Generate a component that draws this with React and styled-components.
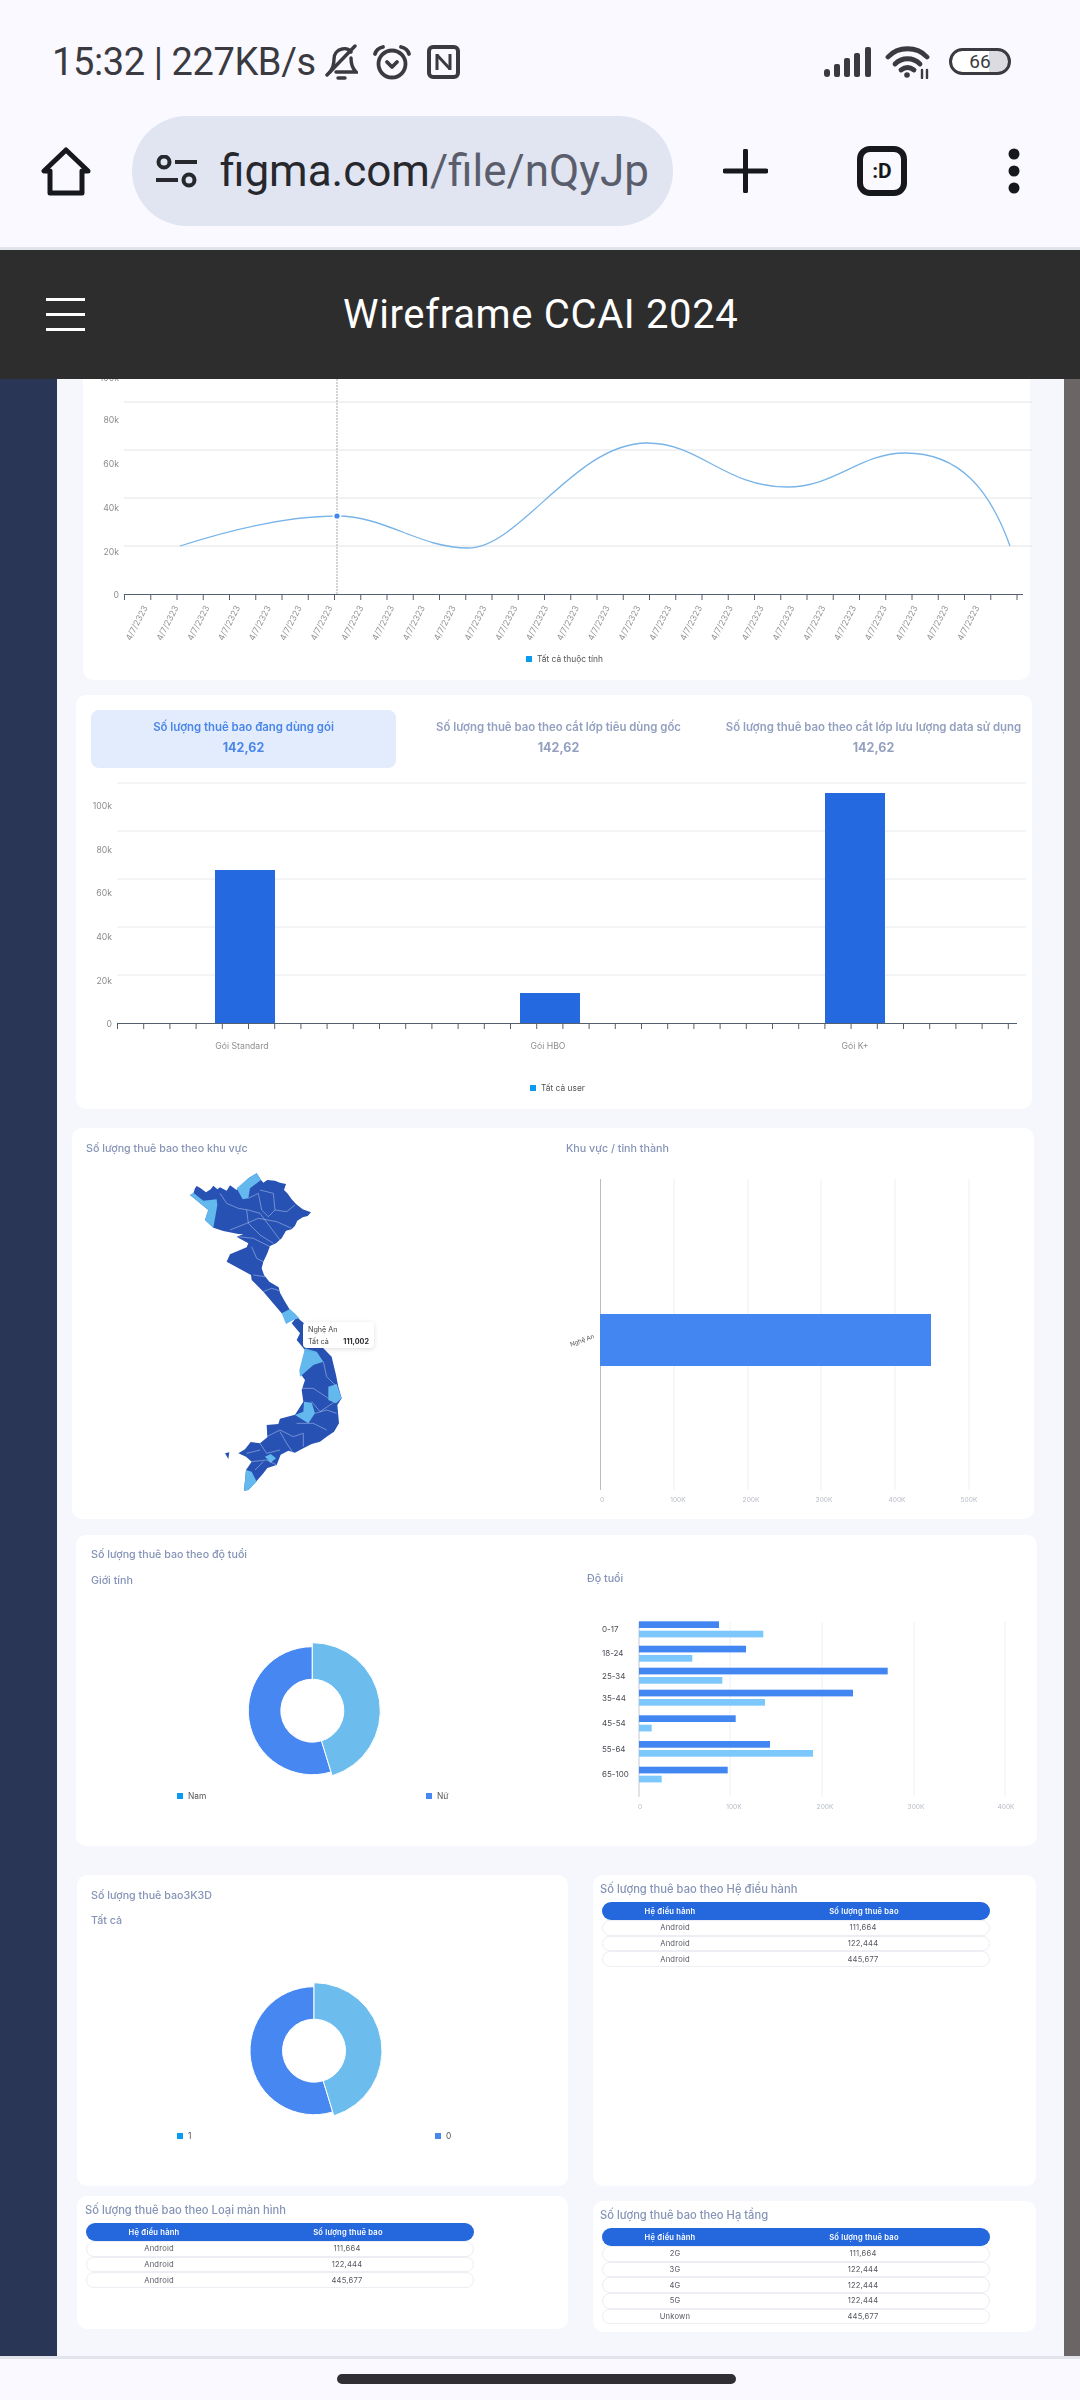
import React from "react";
import styled, { createGlobalStyle } from "styled-components";

const GlobalStyle = createGlobalStyle`
  html, body {
    margin: 0;
    padding: 0;
    background: #f9f9ff;
    font-family: "Inter", "Noto Sans", sans-serif;
  }
  * {
    box-sizing: border-box;
  }
`;

const Screen = styled.div`
  width: 1080px;
  height: 2400px;
  display: flex;
  flex-direction: column;
  overflow: hidden;
  background: #f9f9ff;
`;

const StatusBar = styled.div`
  height: 115px;
  padding: 8px 0 0 52px;
  display: flex;
  align-items: center;
  color: #3a3a40;
  font-family: "Roboto", sans-serif;
`;

const StatusText = styled.span`
  width: 272px;
  flex: none;
  font-size: 38px;
  letter-spacing: -0.4px;
  white-space: nowrap;
`;

const StatusIcon = styled.svg`
  flex: none;
  margin-right: ${(props) => props.$mr || 0}px;
  margin-left: ${(props) => props.$ml || 0}px;
`;

const Battery = styled.div`
  width: 62px;
  height: 27px;
  margin-left: 19px;
  border: 3px solid #3a3a40;
  border-radius: 14px;
  background: linear-gradient(90deg, #fff 0 66%, #dcdce0 66% 100%);
  display: flex;
  align-items: center;
  justify-content: center;
  font-size: 19px;
  line-height: 1;
`;

const AddressBar = styled.div`
  height: 135px;
  padding: 0 0 20px 41px;
  display: flex;
  align-items: center;
  border-bottom: 3px solid #e2e4ec;
`;

const UrlPill = styled.div`
  width: 541px;
  height: 110px;
  margin-left: 41px;
  padding-left: 23px;
  display: flex;
  align-items: center;
  gap: 22px;
  border-radius: 55px;
  background: #e1e5f1;
  font-family: "Roboto", sans-serif;
  font-size: 44px;
  white-space: nowrap;
`;

const UrlHost = styled.span`
  color: #26282e;
`;

const UrlPath = styled.span`
  color: #5a5e6c;
`;

const TabCount = styled.div`
  width: 50px;
  height: 50px;
  margin-left: 89px;
  border: 6px solid #17181c;
  border-radius: 13px;
  display: flex;
  align-items: center;
  justify-content: center;
  font-family: "Roboto", sans-serif;
  font-size: 21px;
  font-weight: 700;
  color: #17181c;
`;

const TitleBar = styled.header`
  height: 129px;
  padding-left: 46px;
  display: flex;
  align-items: center;
  background: #2d2d2d;
`;

const Hamburger = styled.div`
  width: 39px;
  height: 33px;
  display: flex;
  flex-direction: column;
  justify-content: space-between;
`;

const HamburgerLine = styled.span`
  height: 3px;
  background: #fff;
`;

const AppTitle = styled.h1`
  margin: 0 0 0 258px;
  font-family: "Roboto", sans-serif;
  font-size: 40px;
  font-weight: 400;
  letter-spacing: 0.65px;
  color: #fff;
  white-space: nowrap;
`;

const Body = styled.div`
  height: 1977px;
  display: flex;
  overflow: hidden;
  background: #f5f7fc;
`;

const Rail = styled.div`
  width: 57px;
  flex: none;
  background: #2a3655;
`;

const Scrollbar = styled.div`
  width: 16px;
  flex: none;
  background: #6b6565;
`;

const Content = styled.main`
  flex: 1;
  min-width: 0;
  filter: blur(0.45px);
`;

const Card = styled.section`
  width: ${(props) => props.$w}px;
  height: ${(props) => props.$h}px;
  margin-top: ${(props) => props.$mt || 0}px;
  margin-left: ${(props) => props.$ml || 0}px;
  padding: ${(props) => props.$pad || "0"};
  border-radius: ${(props) => props.$radius || "10px"};
  background: #fff;
`;

const Title = styled.div`
  height: 14px;
  margin-top: ${(props) => props.$mt || 0}px;
  font-size: ${(props) => props.$size || 10.7}px;
  line-height: 14px;
  font-weight: 500;
  color: #8593b6;
  white-space: nowrap;
`;

const Chart = styled.svg`
  display: block;
  margin-top: ${(props) => props.$mt || 0}px;
`;

const ChartBleed = styled.div`
  margin-left: -15px;
`;

const ChartText = styled.text`
  font-family: "Inter", sans-serif;
  font-size: ${(props) => props.$size || 8.7}px;
  fill: ${(props) => props.$color || "#8c8c8c"};
  text-anchor: ${(props) => props.$anchor || "middle"};
  dominant-baseline: central;
`;

const LegendRow = styled.div`
  height: 12px;
  margin-top: ${(props) => props.$mt || 0}px;
  padding-left: ${(props) => props.$pl || 0}px;
  display: flex;
  align-items: center;
`;

const LegendItem = styled.div`
  width: ${(props) => (props.$w ? `${props.$w}px` : "auto")};
  display: flex;
  align-items: center;
  gap: 5px;
  font-size: 8.4px;
  color: #555;
  white-space: nowrap;
`;

const LegendSwatch = styled.span`
  width: 6px;
  height: 6px;
  background: ${(props) => props.$color || "#0a9af0"};
`;

const Tabs = styled.div`
  display: grid;
  grid-template-columns: repeat(3, 305px);
  gap: 10px;
`;

const Tab = styled.div`
  height: 58px;
  padding-top: 10px;
  display: flex;
  flex-direction: column;
  align-items: center;
  gap: 7px;
  border-radius: 8px;
  background: ${(props) => (props.$active ? "#e2ecfd" : "transparent")};
  color: ${(props) => (props.$active ? "#4a86e8" : "#93a0bf")};
  white-space: nowrap;
`;

const TabLabel = styled.span`
  font-size: 11.4px;
  line-height: 14px;
  font-weight: 600;
`;

const TabValue = styled.span`
  font-size: 12.5px;
  line-height: 14px;
  font-weight: 700;
`;

const SplitGrid = styled.div`
  display: grid;
  grid-template-columns: ${(props) => props.$columns};
`;

const Panel = styled.div`
  padding-left: ${(props) => props.$pl || 0}px;
  min-width: 0;
`;

const MapWrap = styled.div`
  position: relative;
  width: 220px;
  height: 340px;
  margin: 4px 0 0 94px;
`;

const MapTooltip = styled.div`
  position: absolute;
  left: 123px;
  top: 162px;
  width: 71px;
  height: 26px;
  padding: 2px 5px;
  border-radius: 4px;
  background: #fff;
  box-shadow: 0 1px 4px rgba(30, 40, 70, 0.16);
  font-size: 7.2px;
  line-height: 11.5px;
  color: #444;
  white-space: nowrap;
`;

const TooltipRow = styled.div`
  display: flex;
  justify-content: space-between;
`;

const TooltipValue = styled.b`
  font-weight: 700;
  color: #2c2c30;
`;

const BottomGrid = styled.div`
  margin: 29px 0 0 20px;
  display: grid;
  grid-template-columns: 491px 443px;
  column-gap: 25px;
`;

const TableCard = styled(Card)`
  padding: 7px 0 0 ${(props) => props.$pl}px;
`;

const Table = styled.div`
  width: 388px;
  margin: 6px 0 0 ${(props) => props.$ml}px;
`;

const TableHead = styled.div`
  height: 18px;
  display: grid;
  grid-template-columns: 136px 252px;
  align-items: center;
  border-radius: 9px;
  background: #2568de;
  color: #fff;
  font-size: 7.6px;
  font-weight: 600;
  letter-spacing: 0.2px;
  text-align: center;
`;

const TableRow = styled.div`
  height: 15.7px;
  display: grid;
  grid-template-columns: 144px 232px;
  align-items: center;
  border: 1px solid #eceef3;
  border-radius: 8px;
  color: #55585f;
  font-size: 7.6px;
  letter-spacing: 0.2px;
  text-align: center;
`;

const NavBar = styled.div`
  flex: 1;
  padding-top: 15px;
  display: flex;
  justify-content: center;
  border-top: 3px solid #e2e4ec;
`;

const NavHandle = styled.div`
  width: 399px;
  height: 10px;
  margin-right: 7px;
  border-radius: 5px;
  background: #303034;
`;

const BellIcon = () => (
  <StatusIcon width="34" height="36" viewBox="0 0 34 36" fill="none" stroke="#3a3a40" strokeWidth="3.4" strokeLinecap="round">
    <path d="M6 28c3-4 4-8 4-13 0-5 3-9 8-10 4-1 7 0 9 3M27 14c0 6 1 10 5 14H12" />
    <path d="M3 31 31 2" />
    <path d="M14 34h7" />
  </StatusIcon>
);

const AlarmIcon = () => (
  <StatusIcon width="40" height="36" viewBox="0 0 40 36" fill="none" stroke="#3a3a40" strokeWidth="3.8" strokeLinecap="round" strokeLinejoin="round" $ml={14}>
    <circle cx="20" cy="20" r="13.5" />
    <path d="M3 10c1-4 4-6 8-7M37 10c-1-4-4-6-8-7" />
    <path d="m15 18 5 5 5-5" />
  </StatusIcon>
);

const NfcIcon = () => (
  <StatusIcon width="33" height="34" viewBox="0 0 33 34" fill="none" $ml={15}>
    <rect x="2" y="2" width="29" height="30" rx="4" stroke="#3a3a40" strokeWidth="4" />
    <path d="M10 9v16M23 9v16" stroke="#3a3a40" strokeWidth="3" />
    <path d="M10 10 23 24" stroke="#3a3a40" strokeWidth="3" />
  </StatusIcon>
);

const SignalIcon = () => (
  <StatusIcon width="47" height="30" viewBox="0 0 47 30" fill="#3a3a40" $ml={364}>
    <rect x="0" y="22" width="6" height="8" rx="3" />
    <rect x="10" y="17" width="6" height="13" rx="2" />
    <rect x="20" y="11" width="6" height="19" rx="2" />
    <rect x="30" y="6" width="6" height="24" rx="2" />
    <rect x="41" y="0" width="6" height="30" rx="2" />
  </StatusIcon>
);

const WifiIcon = () => (
  <StatusIcon width="45" height="34" viewBox="0 0 45 34" fill="none" stroke="#3a3a40" strokeWidth="4.8" strokeLinecap="round" $ml={14}>
    <path d="M3 12C13 1 32 1 42 12" />
    <path d="M10 19c7-7 18-7 25 0" />
    <path d="M16 25c4-3 9-3 13 0" />
    <circle cx="22" cy="30" r="2.8" fill="#3a3a40" stroke="none" />
    <path d="M37 25v8M42 25v8" strokeWidth="2.4" />
  </StatusIcon>
);

const HomeIcon = () => (
  <svg width="50" height="50" viewBox="0 0 50 50" fill="none" stroke="#17181c" strokeWidth="5" strokeLinejoin="round">
    <path d="M25 4 3 25h6v22h32V25h6Z" />
  </svg>
);

const TuneIcon = () => (
  <svg width="43" height="33" viewBox="0 0 43 33" fill="none" stroke="#26282e" strokeWidth="4" style={{ flex: "none" }}>
    <circle cx="9" cy="7" r="5.5" />
    <path d="M20 7h22M1 25h22" />
    <circle cx="34" cy="25" r="5.5" />
  </svg>
);

const PlusIcon = () => (
  <svg width="45" height="44" viewBox="0 0 45 44" fill="none" stroke="#17181c" strokeWidth="5" strokeLinecap="round" style={{ marginLeft: 50 }}>
    <path d="M22.5 2v40M2 22h41" />
  </svg>
);

const MoreIcon = () => (
  <svg width="12" height="46" viewBox="0 0 12 46" fill="#17181c" style={{ marginLeft: 101 }}>
    <circle cx="6" cy="6" r="5.5" />
    <circle cx="6" cy="23" r="5.5" />
    <circle cx="6" cy="40" r="5.5" />
  </svg>
);

const range = (n) => Array.from({ length: n }, (_, i) => i);

const LineChart = () => (
  <Chart width="950" height="268" viewBox="83 379 950 268">
    {[402, 450, 498, 546].map((y) => (
      <line key={y} x1="124" x2="1032" y1={y} y2={y} stroke="#e2e4e8" />
    ))}
    {[["100k", 378], ["80k", 420], ["60k", 464], ["40k", 508], ["20k", 552], ["0", 595]].map(([t, y]) => (
      <ChartText key={t} x="119" y={y} $anchor="end">{t}</ChartText>
    ))}
    <line x1="124" x2="1023" y1="594.5" y2="594.5" stroke="#55606e" />
    {range(35).map((i) => (
      <line key={i} x1={124.5 + i * 26.25} x2={124.5 + i * 26.25} y1="594" y2="600" stroke="#55606e" />
    ))}
    {range(28).map((i) => {
      const x = 128 + i * 30.8;
      return (
        <ChartText key={i} x={x} y="640" $size={8.7} $color="#989898" $anchor="start" transform={`rotate(-63 ${x} 640)`}>
          4/7/2323
        </ChartText>
      );
    })}
    <line x1="337" x2="337" y1="379" y2="594" stroke="#a8a8a8" strokeDasharray="2 1" />
    <path
      d="M180 546C230 530 290 516 337 516C385 516 420 548 468 548C520 548 575 443 647 443C700 443 725 487 787 487C835 487 860 453 905 453C960 453 990 490 1010 546"
      fill="none"
      stroke="#78b4e8"
      strokeWidth="1.3"
    />
    <circle cx="337" cy="516" r="4.5" fill="#fff" />
    <circle cx="337" cy="516" r="2.6" fill="#3f88f2" />
  </Chart>
);

const columns = [
  { label: "Gói Standard", x: 215, top: 870, labelX: 242 },
  { label: "Gói HBO", x: 520, top: 993, labelX: 548 },
  { label: "Gói K+", x: 825, top: 793, labelX: 855 },
];

const ColumnChart = () => (
  <Chart width="956" height="308" viewBox="76 768 956 308">
    {[783, 831, 879, 927, 975].map((y) => (
      <line key={y} x1="117" x2="1026" y1={y} y2={y} stroke="#e8eaee" />
    ))}
    {[["100k", 806], ["80k", 850], ["60k", 893], ["40k", 937], ["20k", 981], ["0", 1024]].map(([t, y]) => (
      <ChartText key={t} x="112" y={y} $anchor="end">{t}</ChartText>
    ))}
    {columns.map((c) => (
      <g key={c.label}>
        <rect x={c.x} y={c.top} width="60" height={1023 - c.top} fill="#2569e0" />
        <ChartText x={c.labelX} y="1046" $color="#8f8f8f">{c.label}</ChartText>
      </g>
    ))}
    <line x1="117" x2="1017" y1="1023.5" y2="1023.5" stroke="#55606e" />
    {range(35).map((i) => (
      <line key={i} x1={117.5 + i * 26.2} x2={117.5 + i * 26.2} y1="1023" y2="1029" stroke="#55606e" />
    ))}
  </Chart>
);

const VietnamMap = () => (
  <svg width="220" height="340" viewBox="0 0 660 1020">
    <path
      fill="#2752b4"
      d="M45 85 50 78 62 85 78 97 92 88 100 77 112 88 120 82 140 92 150 76 170 90 205 55 230 40 243 60 250 68 262 60 285 62 300 68 318 72 312 90 322 100 335 118 348 132 368 148 393 157 383 168 368 172 352 182 345 197 335 208 318 212 305 235 288 250 270 258 262 280 250 305 245 325 252 345 268 365 296 382 300 398 312 420 330 450 345 462 360 480 372 490 400 520 430 565 455 590 462 620 468 645 475 680 485 715 472 735 477 790 462 815 440 830 420 845 395 852 370 865 345 878 325 872 302 884 290 915 262 924 250 940 228 965 205 990 192 992 198 930 215 905 198 890 175 880 195 868 212 846 240 850 262 832 260 795 295 792 300 776 345 764 370 725 365 690 375 660 360 640 375 570 350 540 360 520 335 490 345 478 305 460 250 395 215 360 213 345 140 305 150 283 200 262 205 250 180 236 170 230 190 222 175 222 130 213 100 203 75 180 85 150 30 105 40 100Z"
    />
    <path fill="#2752b4" d="M135 880 148 877 145 897Z" />
    <g fill="#63b8ee">
      <path d="M30 105 40 98 70 122 110 118 112 135 100 203 75 180 85 150Z" />
      <path d="M170 85 205 55 230 40 243 60 210 85 205 115 188 118Z" />
      <path d="M305 460 330 447 358 475 345 478 318 492Z" />
      <path d="M375 565 410 575 430 605 400 615 360 650 358 630Z" />
      <path d="M445 680 470 672 485 715 468 730 445 720Z" />
      <path d="M372 725 395 728 405 760 385 790 345 765 370 755Z" />
      <path d="M255 890 272 882 288 895 272 908Z" />
      <path d="M198 930 215 935 230 965 205 990 192 992Z" />
    </g>
    <g fill="none" stroke="#bccdee" strokeWidth="1.5">
      <polyline points="120,100 140,130 175,145 205,150 240,160 270,200 300,240" />
      <polyline points="205,115 235,100 245,150 265,170 285,150 320,155 345,135" />
      <polyline points="240,90 280,100 285,150" />
      <polyline points="200,150 205,190 240,225 280,250" />
      <polyline points="150,210 200,190 235,175 290,185 335,205" />
      <polyline points="175,230 220,235 270,260" />
      <polyline points="215,260 230,295 250,305" />
      <polyline points="220,345 255,350" />
      <polyline points="250,395 275,385 298,392" />
      <polyline points="430,605 440,650 470,680" />
      <polyline points="365,685 400,685 445,715" />
      <polyline points="395,725 420,755 465,725" />
      <polyline points="405,760 440,750 470,760" />
      <polyline points="350,790 400,790 440,810" />
      <polyline points="300,815 320,850 340,880" />
      <polyline points="260,830 300,810 340,830 370,820 370,860" />
      <polyline points="240,850 260,880 300,870" />
      <polyline points="215,905 260,900 290,915" />
      <polyline points="225,930 250,905" />
      <polyline points="200,880 240,870" />
    </g>
  </svg>
);

const RegionBars = () => (
  <Chart width="468" height="350" viewBox="566 1160 468 350" $mt={4}>
    {[674, 748, 821, 895, 969].map((x) => (
      <line key={x} x1={x} x2={x} y1="1179" y2="1490" stroke="#eceef2" />
    ))}
    <line x1="600.5" x2="600.5" y1="1179" y2="1490" stroke="#b8bcc6" />
    <rect x="600" y="1314" width="331" height="52" fill="#4386f2" />
    <ChartText x="582" y="1340" $size={6.2} $color="#555" transform="rotate(-20 582 1340)">Nghệ An</ChartText>
    {[["0", 602], ["100K", 678], ["200K", 751], ["300K", 824], ["400K", 897], ["500K", 969]].map(([t, x]) => (
      <ChartText key={t} x={x} y="1500" $size={6.6} $color="#b5bac4">{t}</ChartText>
    ))}
  </Chart>
);

const polar = (cx, cy, r, deg) => {
  const a = ((deg - 90) * Math.PI) / 180;
  return [cx + r * Math.cos(a), cy + r * Math.sin(a)];
};

const ringSlice = (cx, cy, outer, inner, from, to) => {
  const large = to - from > 180 ? 1 : 0;
  const [x1, y1] = polar(cx, cy, outer, from);
  const [x2, y2] = polar(cx, cy, outer, to);
  const [x3, y3] = polar(cx, cy, inner, to);
  const [x4, y4] = polar(cx, cy, inner, from);
  return `M${x1} ${y1}A${outer} ${outer} 0 ${large} 1 ${x2} ${y2}L${x3} ${y3}A${inner} ${inner} 0 ${large} 0 ${x4} ${y4}Z`;
};

const Donut = ({ width, cx, cy }) => (
  <Chart width={width} height="200" viewBox={`0 0 ${width} 200`}>
    <path d={ringSlice(cx, cy, 64, 31.5, 163, 360)} fill="#4687f2" stroke="#fff" />
    <path d={ringSlice(cx, cy, 68, 31.5, 0, 163)} fill="#6cbdee" stroke="#fff" />
  </Chart>
);

const ageRows = [
  { label: "0-17", y: 1629, dark: [1621.3, 719], light: [1630.7, 763.3] },
  { label: "18-24", y: 1653.3, dark: [1645.7, 746], light: [1655, 692.3] },
  { label: "25-34", y: 1675.7, dark: [1667.7, 887.7], light: [1677, 722.3] },
  { label: "35-44", y: 1697.7, dark: [1689.7, 853], light: [1699, 765] },
  { label: "45-54", y: 1723.3, dark: [1715.3, 735.7], light: [1724.7, 651.7] },
  { label: "55-64", y: 1748.7, dark: [1741, 770], light: [1750, 813] },
  { label: "65-100", y: 1774.3, dark: [1766.7, 727.7], light: [1775.7, 661.7] },
];

const AgeBars = () => (
  <Chart width="465" height="240" viewBox="572 1586 465 240">
    {[730, 822, 914, 1005].map((x) => (
      <line key={x} x1={x} x2={x} y1="1622" y2="1797" stroke="#eef0f4" />
    ))}
    <line x1="639" x2="639" y1="1622" y2="1797" stroke="#c4c8d2" />
    {ageRows.map((row) => (
      <g key={row.label}>
        <ChartText x="602" y={row.y} $anchor="start" $size={8} $color="#4a4d55">{row.label}</ChartText>
        <rect x="639" y={row.dark[0]} width={row.dark[1] - 639} height="6.7" fill="#4286f2" />
        <rect x="639" y={row.light[0]} width={row.light[1] - 639} height="6.7" fill="#7cc7fb" />
      </g>
    ))}
    {[["0", 640], ["100K", 734], ["200K", 825], ["300K", 916], ["400K", 1006]].map(([t, x]) => (
      <ChartText key={t} x={x} y="1807" $size={6.6} $color="#b5bac4">{t}</ChartText>
    ))}
  </Chart>
);

const HEAD = ["Hệ điều hành", "Số lượng thuê bao"];
const ANDROID_ROWS = [
  ["Android", "111,664"],
  ["Android", "122,444"],
  ["Android", "445,677"],
];
const INFRA_ROWS = [
  ["2G", "111,664"],
  ["3G", "122,444"],
  ["4G", "122,444"],
  ["5G", "122,444"],
  ["Unkown", "445,677"],
];

const DataTable = ({ rows, ml }) => (
  <Table $ml={ml}>
    <TableHead>
      <span>{HEAD[0]}</span>
      <span>{HEAD[1]}</span>
    </TableHead>
    {rows.map((row, i) => (
      <TableRow key={i}>
        <span>{row[0]}</span>
        <span>{row[1]}</span>
      </TableRow>
    ))}
  </Table>
);

const App = () => (
  <Screen>
    <GlobalStyle />
    <StatusBar>
      <StatusText>15:32 | 227KB/s</StatusText>
      <BellIcon />
      <AlarmIcon />
      <NfcIcon />
      <SignalIcon />
      <WifiIcon />
      <Battery>66</Battery>
    </StatusBar>
    <AddressBar>
      <HomeIcon />
      <UrlPill>
        <TuneIcon />
        <span>
          <UrlHost>figma.com</UrlHost>
          <UrlPath>/file/nQyJp</UrlPath>
        </span>
      </UrlPill>
      <PlusIcon />
      <TabCount>:D</TabCount>
      <MoreIcon />
    </AddressBar>
    <TitleBar>
      <Hamburger>
        <HamburgerLine />
        <HamburgerLine />
        <HamburgerLine />
      </Hamburger>
      <AppTitle>Wireframe CCAI 2024</AppTitle>
    </TitleBar>
    <Body>
      <Rail />
      <Content>
        <Card $ml={26} $w={947} $h={301} $radius="0 0 10px 10px">
          <LineChart />
          <LegendRow $mt={6} $pl={443}>
            <LegendItem>
              <LegendSwatch />
              Tất cả thuộc tính
            </LegendItem>
          </LegendRow>
        </Card>
        <Card $ml={19} $mt={15} $w={956} $h={414} $pad="15px 0 0 15px">
          <Tabs>
            <Tab $active>
              <TabLabel>Số lượng thuê bao đang dùng gói</TabLabel>
              <TabValue>142,62</TabValue>
            </Tab>
            <Tab>
              <TabLabel>Số lượng thuê bao theo cắt lớp tiêu dùng gốc</TabLabel>
              <TabValue>142,62</TabValue>
            </Tab>
            <Tab>
              <TabLabel>Số lượng thuê bao theo cắt lớp lưu lượng data sử dụng</TabLabel>
              <TabValue>142,62</TabValue>
            </Tab>
          </Tabs>
          <ChartBleed>
            <ColumnChart />
          </ChartBleed>
          <LegendRow $mt={6} $pl={439}>
            <LegendItem>
              <LegendSwatch />
              Tất cả user
            </LegendItem>
          </LegendRow>
        </Card>
        <Card $ml={15} $mt={19} $w={962} $h={391} $pad="14px 0 0 0">
          <SplitGrid $columns="494px 468px">
            <Panel $pl={14}>
              <Title>Số lượng thuê bao theo khu vực</Title>
              <MapWrap>
                <VietnamMap />
                <MapTooltip>
                  <div>Nghệ An</div>
                  <TooltipRow>
                    <span>Tất cả</span>
                    <TooltipValue>111,002</TooltipValue>
                  </TooltipRow>
                </MapTooltip>
              </MapWrap>
            </Panel>
            <Panel>
              <Title>Khu vực / tỉnh thành</Title>
              <RegionBars />
            </Panel>
          </SplitGrid>
        </Card>
        <Card $ml={19} $mt={16} $w={961} $h={311} $pad="13px 0 0 0">
          <Panel $pl={15}>
            <Title>Số lượng thuê bao theo độ tuổi</Title>
          </Panel>
          <SplitGrid $columns="496px 465px">
            <div>
              <Panel $pl={15}>
                <Title $mt={12}>Giới tính</Title>
              </Panel>
              <Donut width={496} cx={236.3} cy={122.7} />
              <LegendRow $mt={2} $pl={101}>
                <LegendItem $w={249}>
                  <LegendSwatch />
                  Nam
                </LegendItem>
                <LegendItem>
                  <LegendSwatch $color="#4687f2" />
                  Nữ
                </LegendItem>
              </LegendRow>
            </div>
            <div>
              <Panel $pl={15}>
                <Title $mt={10}>Độ tuổi</Title>
              </Panel>
              <AgeBars />
            </div>
          </SplitGrid>
        </Card>
        <BottomGrid>
          <div>
            <Card $w={491} $h={311} $pad="14px 0 0 0">
              <Panel $pl={14}>
                <Title>Số lượng thuê bao3K3D</Title>
                <Title $mt={11}>Tất cả</Title>
              </Panel>
              <Donut width={491} cx={237} cy={122.7} />
              <LegendRow $mt={2} $pl={100}>
                <LegendItem $w={258}>
                  <LegendSwatch />1
                </LegendItem>
                <LegendItem>
                  <LegendSwatch $color="#4687f2" />0
                </LegendItem>
              </LegendRow>
            </Card>
            <TableCard $w={491} $h={133} $mt={10} $pl={8}>
              <Title $size={11.2}>Số lượng thuê bao theo Loại màn hình</Title>
              <DataTable rows={ANDROID_ROWS} ml={1} />
            </TableCard>
          </div>
          <div>
            <TableCard $w={443} $h={311} $pl={7}>
              <Title $size={11.2}>Số lượng thuê bao theo Hệ điều hành</Title>
              <DataTable rows={ANDROID_ROWS} ml={2} />
            </TableCard>
            <TableCard $w={443} $h={131} $mt={15} $pl={7}>
              <Title $size={11.2}>Số lượng thuê bao theo Hạ tầng</Title>
              <DataTable rows={INFRA_ROWS} ml={2} />
            </TableCard>
          </div>
        </BottomGrid>
      </Content>
      <Scrollbar />
    </Body>
    <NavBar>
      <NavHandle />
    </NavBar>
  </Screen>
);

export default App;
